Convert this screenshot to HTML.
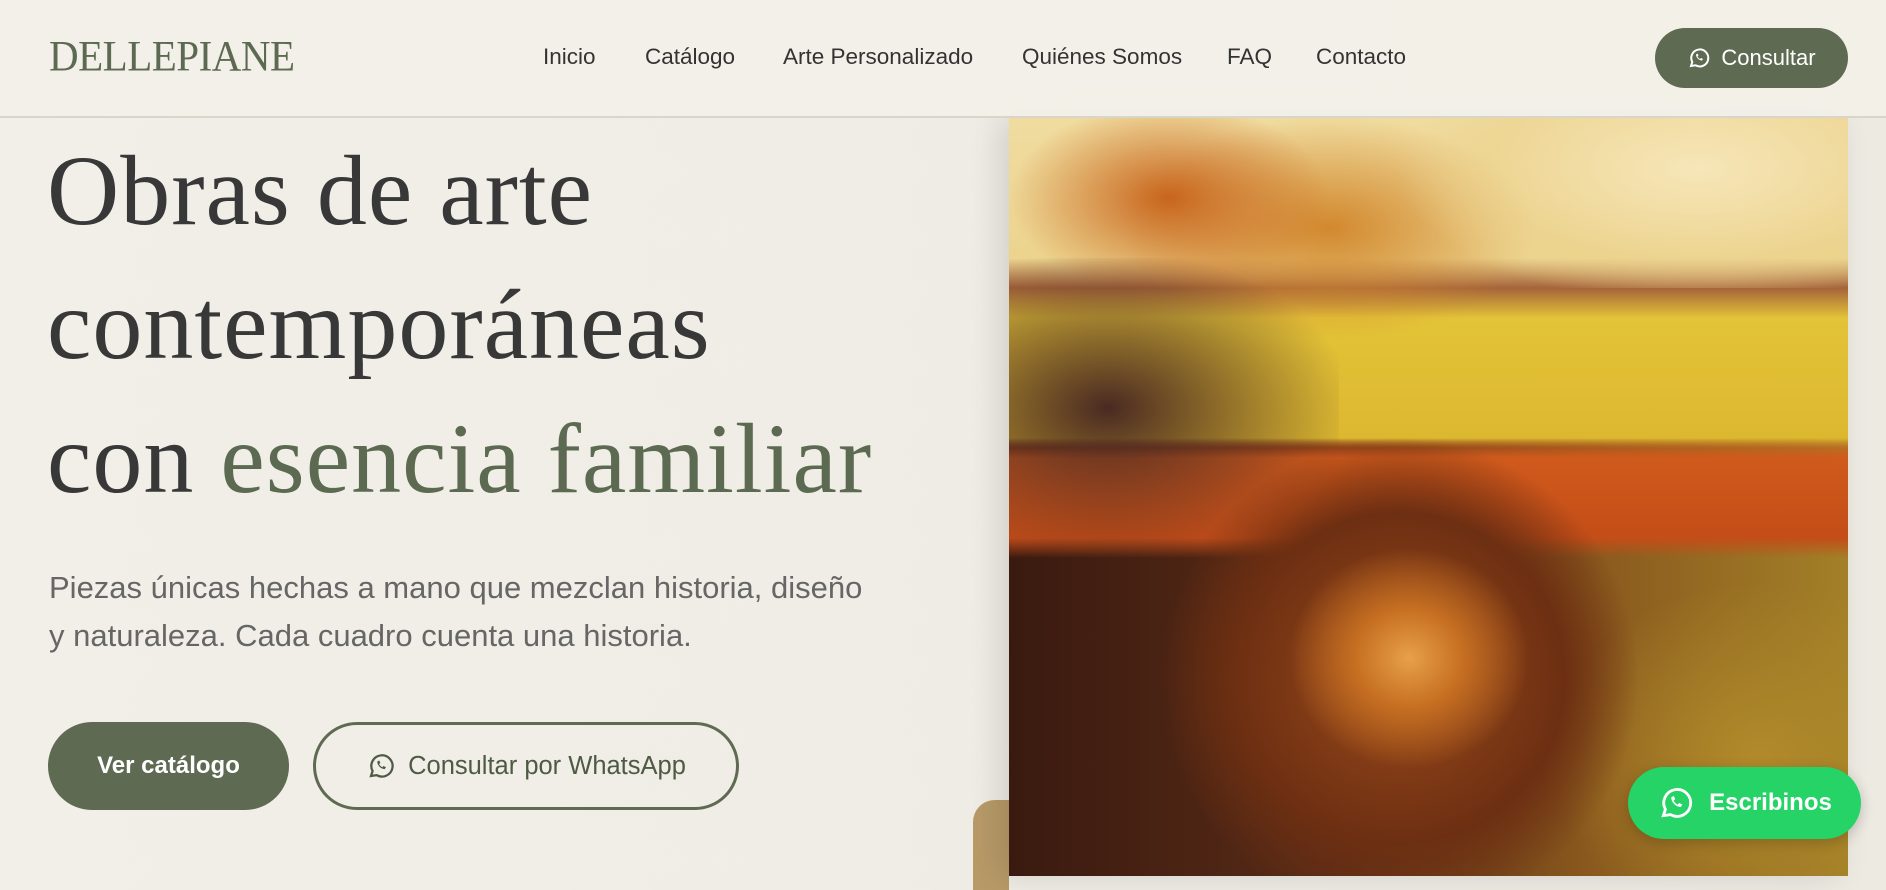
<!DOCTYPE html>
<html><head><meta charset="utf-8"><style>
*{margin:0;padding:0;box-sizing:border-box}
body{width:1886px;height:876px;overflow:hidden;background:linear-gradient(90deg,#f1efe8,#edeae2);font-family:"Liberation Sans",sans-serif;position:relative}
.hdr{position:absolute;left:0;top:0;width:1886px;height:118px;background:rgba(243,240,232,.97);border-bottom:2px solid #d8d5c9;z-index:5}
.logo{position:absolute;left:49px;top:32px;font-family:"Liberation Serif",serif;font-size:41px;color:#5d6a52;letter-spacing:-0.5px;transform:scaleY(1.05)}
.nav{position:absolute;top:44px;font-size:22.5px;color:#333}
.btn1{position:absolute;left:1655px;top:28px;width:193px;height:60px;border-radius:30px;background:#5f6a52;color:#fff;font-size:22px;display:flex;align-items:center;justify-content:center;gap:10px}
.art{position:absolute;left:1009px;top:118px;width:839px;height:758px;overflow:hidden;box-shadow:-10px 0 30px rgba(0,0,0,.12);
background:
radial-gradient(ellipse 120px 110px at 400px 540px,#e8a048 0%,#c66f22 45%,transparent 100%),
radial-gradient(ellipse 300px 300px at 390px 560px,#9a4a1a 0%,#6d2f12 55%,transparent 80%),
radial-gradient(ellipse 260px 220px at 750px 640px,#b08a2a,transparent 80%),
radial-gradient(ellipse 200px 120px at 160px 80px,#c8651c,transparent 80%),
radial-gradient(ellipse 260px 140px at 320px 110px,#d2882e,transparent 80%),
linear-gradient(180deg,transparent 0,transparent 320px,#d05a1c 340px,#c44d18 420px,transparent 440px),
linear-gradient(180deg,#f0dca0 0,#ecd48e 140px,#a5643a 170px,#e3c338 200px,#dcb830 320px,transparent 330px),
linear-gradient(90deg,#3a1a10 0,#5a2c16 40%,#8a5a1e 70%,#a38028 100%)}
.art .sky{position:absolute;right:0;top:0;width:500px;height:170px;background:radial-gradient(ellipse 60% 80% at 70% 30%,#f6e6b8,rgba(236,210,142,.6) 70%,rgba(236,210,142,0) 100%)}
.art .dark{position:absolute;left:0;top:140px;width:330px;height:300px;background:radial-gradient(ellipse at 30% 50%,#4a2a22,transparent 75%)}
.tan{position:absolute;left:973px;top:800px;width:36px;height:90px;background:#b89a68;border-radius:22px 0 0 0}
h1{position:absolute;left:47px;top:124px;font-family:"Liberation Serif",serif;font-weight:normal;font-size:100px;line-height:134px;color:#383838;letter-spacing:1px}
h1 span{color:#5d6a52}
.p{position:absolute;left:49px;top:564px;font-size:31px;line-height:48px;color:#666}
.b1{position:absolute;left:48px;top:722px;width:241px;height:88px;border-radius:44px;background:#5f6a52;color:#fff;font-size:24px;font-weight:bold;display:flex;align-items:center;justify-content:center}
.b2{position:absolute;left:313px;top:722px;width:426px;height:88px;border-radius:44px;border:3px solid #5f6a52;color:#4d5a44;font-size:25.5px;display:flex;align-items:center;justify-content:center;gap:12px}
.wa{position:absolute;left:1628px;top:767px;width:233px;height:72px;border-radius:36px;background:#25d366;color:#fff;font-size:24px;font-weight:bold;display:flex;align-items:center;justify-content:center;gap:14px;box-shadow:0 4px 14px rgba(0,0,0,.2);z-index:6}
</style></head><body>
<div class="tan"></div>
<div class="art"><div class="sky"></div><div class="dark"></div></div>
<div class="hdr">
<div class="logo">DELLEPIANE</div>
<div class="nav" style="left:543px">Inicio</div>
<div class="nav" style="left:645px">Catálogo</div>
<div class="nav" style="left:783px">Arte Personalizado</div>
<div class="nav" style="left:1022px">Quiénes Somos</div>
<div class="nav" style="left:1227px">FAQ</div>
<div class="nav" style="left:1316px">Contacto</div>
<div class="btn1"><svg width="24" height="24" viewBox="0 0 24 24" fill="none" stroke="#fff" stroke-width="2"><path d="M4 20l1.3-4A8.5 8.5 0 1 1 8.5 19.3Z"/><path d="M9 8.5c0 3 3 6 6 6l1-1.5-2-1-1 1c-1-.5-2-1.5-2.5-2.5l1-1-1-2Z" fill="#fff" stroke="none"/></svg>Consultar</div>
</div>
<h1>Obras de arte<br>contemporáneas<br>con <span>esencia familiar</span></h1>
<div class="p">Piezas únicas hechas a mano que mezclan historia, diseño<br>y naturaleza. Cada cuadro cuenta una historia.</div>
<div class="b1">Ver catálogo</div>
<div class="b2"><svg width="30" height="30" viewBox="0 0 24 24" fill="none" stroke="#4d5a44" stroke-width="1.8"><path d="M4 20l1.3-4A8.5 8.5 0 1 1 8.5 19.3Z"/><path d="M9 8.5c0 3 3 6 6 6l1-1.5-2-1-1 1c-1-.5-2-1.5-2.5-2.5l1-1-1-2Z" fill="#4d5a44" stroke="none"/></svg>Consultar por WhatsApp</div>
<div class="wa"><svg width="38" height="38" viewBox="0 0 24 24" fill="none" stroke="#fff" stroke-width="1.8"><path d="M4 20l1.3-4A8.5 8.5 0 1 1 8.5 19.3Z"/><path d="M9 8.5c0 3 3 6 6 6l1-1.5-2-1-1 1c-1-.5-2-1.5-2.5-2.5l1-1-1-2Z" fill="#fff" stroke="none"/></svg>Escribinos</div>
</body></html>
